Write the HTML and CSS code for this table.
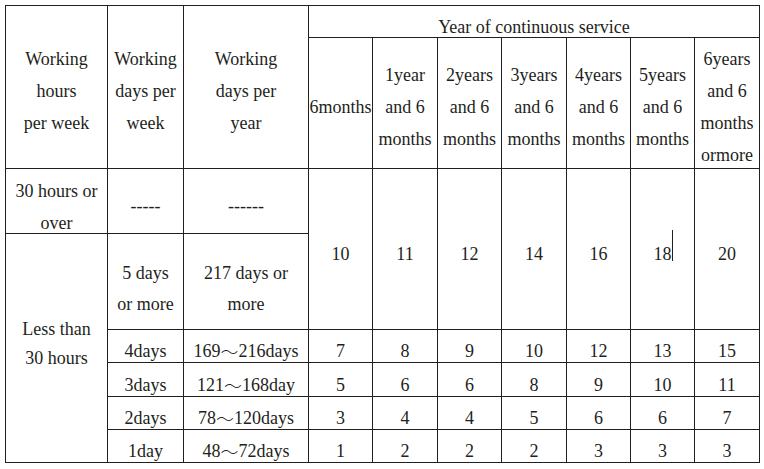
FILE: index.html
```html
<!DOCTYPE html>
<html lang="en">
<head>
<meta charset="utf-8">
<title>Annual paid leave table</title>
<link rel="stylesheet" href="styles.css">
</head>
<body>
<div class="sheet">
  <div class="cell hd c1 r12">Working<br>hours<br>per week</div>
  <div class="cell hd c2 r12">Working<br>days per<br>week</div>
  <div class="cell hd c3 r12">Working<br>days per<br>year</div>
  <div class="cell title">Year of continuous service</div>

  <div class="cell hd">6months</div>
  <div class="cell hd">1year<br>and 6<br>months</div>
  <div class="cell hd">2years<br>and 6<br>months</div>
  <div class="cell hd">3years<br>and 6<br>months</div>
  <div class="cell hd">4years<br>and 6<br>months</div>
  <div class="cell hd">5years<br>and 6<br>months</div>
  <div class="cell hd">6years<br>and 6<br>months<br>ormore</div>

  <div class="cell over">30 hours or<br>over</div>
  <div class="cell dash">-----</div>
  <div class="cell dash">------</div>
  <div class="cell big">10</div>
  <div class="cell big">11</div>
  <div class="cell big">12</div>
  <div class="cell big">14</div>
  <div class="cell big">16</div>
  <div class="cell big"><span class="caret-host">18<span class="caret"></span></span></div>
  <div class="cell big">20</div>

  <div class="cell less">Less than<br>30 hours</div>
  <div class="cell five">5 days<br>or more</div>
  <div class="cell five">217 days or<br>more</div>

  <div class="cell row">4days</div>
  <div class="cell row">169<span class="wave">～</span>216days</div>
  <div class="cell row">7</div><div class="cell row">8</div><div class="cell row">9</div><div class="cell row">10</div><div class="cell row">12</div><div class="cell row">13</div><div class="cell row">15</div>

  <div class="cell row">3days</div>
  <div class="cell row">121<span class="wave">～</span>168day</div>
  <div class="cell row">5</div><div class="cell row">6</div><div class="cell row">6</div><div class="cell row">8</div><div class="cell row">9</div><div class="cell row">10</div><div class="cell row">11</div>

  <div class="cell row">2days</div>
  <div class="cell row">78<span class="wave">～</span>120days</div>
  <div class="cell row">3</div><div class="cell row">4</div><div class="cell row">4</div><div class="cell row">5</div><div class="cell row">6</div><div class="cell row">6</div><div class="cell row">7</div>

  <div class="cell row">1day</div>
  <div class="cell row">48<span class="wave">～</span>72days</div>
  <div class="cell row">1</div><div class="cell row">2</div><div class="cell row">2</div><div class="cell row">2</div><div class="cell row">3</div><div class="cell row">3</div><div class="cell row">3</div>
</div>
</body>
</html>
```
FILE: styles.css
```css
html, body {
  margin: 0;
  padding: 0;
  background: #ffffff;
}
body {
  padding: 5px;
  font-family: "Liberation Serif", "Times New Roman", serif;
  font-size: 18px;
  color: #231f20;
}
.sheet {
  display: grid;
  width: max-content;
  grid-template-columns: 101px 75px 124px 63px 64px 63px 64px 63px 63px 64px;
  grid-template-rows: 31px 130px 64px 95px 32px 33px 32px 32px;
  gap: 1px;
  padding: 1px;
  background: #231f20;
}
.cell {
  background: #ffffff;
  display: flex;
  align-items: center;
  justify-content: center;
  text-align: center;
  white-space: nowrap;
  line-height: 32px;
}
.r12 { grid-row: 1 / span 2; }
.c1 { grid-column: 1; }
.c2 { grid-column: 2; }
.c3 { grid-column: 3; }
.hd { padding-top: 8px; }
.title {
  grid-column: 4 / span 7;
  grid-row: 1;
  padding-top: 11px;
}
.over {
  grid-row: 3;
  padding-top: 12px;
}
.dash {
  grid-row: 3;
  padding-top: 10px;
}
.big {
  grid-row: 3 / span 2;
  padding-top: 9px;
}
.less {
  grid-column: 1;
  grid-row: 4 / span 5;
  line-height: 29px;
  padding-bottom: 8px;
}
.five {
  grid-row: 4;
  line-height: 31px;
  padding-top: 14px;
}
.row { line-height: 20px; padding-top: 10px; }
.wave {
  font-family: "Noto Sans CJK JP", sans-serif;
  font-weight: 300;
}
.caret-host { position: relative; }
.caret {
  position: absolute;
  left: 100%;
  top: -8px;
  width: 1px;
  height: 31px;
  background: #231f20;
}
```
